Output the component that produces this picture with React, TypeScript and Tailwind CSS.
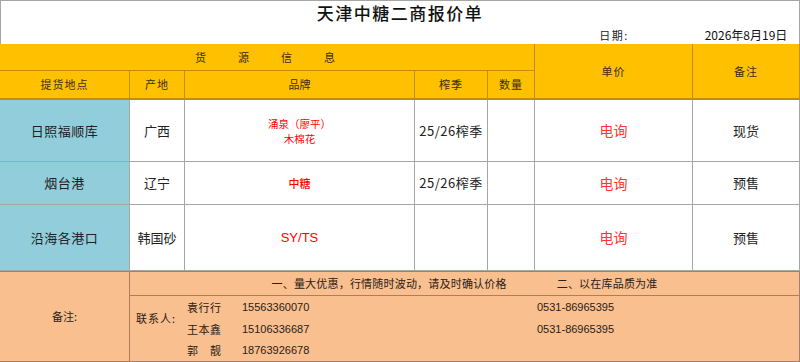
import React from 'react';

const cjk = { fontFamily: "'Noto Sans CJK SC', 'Liberation Sans', sans-serif" };
const num = { fontFamily: "'Liberation Sans', 'Noto Sans CJK SC', sans-serif" };

type Row = {
  place: string;
  origin: string;
  brand: React.ReactNode;
  season: string;
  remark: string;
  h: string;
};

const rows: Row[] = [
  {
    place: '日照福顺库',
    origin: '广西',
    brand: (
      <div className="flex flex-col items-center text-[10.5px] leading-[15px] text-[#ff0000]">
        <span>涌泉（廖平）</span>
        <span>木棉花</span>
      </div>
    ),
    season: '25/26榨季',
    remark: '现货',
    h: 'h-[62px]'
  },
  {
    place: '烟台港',
    origin: '辽宁',
    brand: <span className="text-[11px] font-medium text-[#ff0000]">中糖</span>,
    season: '25/26榨季',
    remark: '预售',
    h: 'h-[43px]'
  },
  {
    place: '沿海各港口',
    origin: '韩国砂',
    brand: (
      <span className="text-[13px] text-[#ff0000]" style={num}>
        SY/TS
      </span>
    ),
    season: '',
    remark: '预售',
    h: 'h-[66px]'
  }
];

const contacts = [
  { name: '袁行行', phone: '15563360070', tel: '0531-86965395' },
  { name: '王本鑫', phone: '15106336687', tel: '0531-86965395' },
  { name: '郭　靓', phone: '18763926678', tel: '' }
];

const head = 'flex items-center justify-center bg-[#ffc000] border-r border-b border-[#bf8f00] text-[11px] text-[#3a2e10]';
const cell = 'flex items-center justify-center bg-white border-r border-b border-[#a6a6a6] text-[13px] text-[#222]';

export default function App() {
  return (
    <div className="w-[800px] h-[362px] overflow-hidden bg-white" style={cjk}>
      <div className="grid grid-cols-[130px_55px_230px_73px_47px_158px_107px] grid-rows-[26px_18px_27px_29px]">
        {/* title */}
        <div className="col-span-7 flex items-end justify-center border-t border-l border-r border-[#a6a6a6] pb-[1px]">
          <span className="text-[17px] font-medium tracking-[1.5px] text-[#111]">天津中糖二商报价单</span>
        </div>
        <div className="col-span-5 border-l border-[#a6a6a6]" />
        <div className="flex items-center justify-center text-[11px] tracking-[1.5px] text-[#222]">日期:</div>
        <div className="flex items-center justify-center border-r border-[#a6a6a6] text-[12px] text-[#111]">
          2026年8月19日
        </div>

        {/* header */}
        <div className={`${head} col-span-5 gap-[32px] pr-[4px]`}>
          <span>货</span>
          <span>源</span>
          <span>信</span>
          <span>息</span>
        </div>
        <div className={`${head} row-span-2 border-b-2 tracking-[1px]`}>单价</div>
        <div className={`${head} row-span-2 border-b-2 tracking-[1px]`}>备注</div>
        <div className={`${head} border-b-2 tracking-[1px]`}>提货地点</div>
        <div className={`${head} border-b-2 tracking-[1px]`}>产地</div>
        <div className={`${head} border-b-2`}>品牌</div>
        <div className={`${head} border-b-2 tracking-[1px]`}>榨季</div>
        <div className={`${head} border-b-2 tracking-[1px]`}>数量</div>
      </div>

      {/* body */}
      {rows.map((r, i) => (
        <div key={i} className={`grid grid-cols-[130px_55px_230px_73px_47px_158px_107px] ${r.h}`}>
          <div className="flex items-center justify-center bg-[#92cddc] border-r border-b border-[#a6a6a6] text-[13px] tracking-[0.5px] text-[#222]">
            {r.place}
          </div>
          <div className={cell}>{r.origin}</div>
          <div className={cell}>{r.brand}</div>
          <div className={`${cell} tracking-[0.5px]`}>{r.season}</div>
          <div className={cell} />
          <div className={`${cell} text-[14px] text-[#ff3333]`}>电询</div>
          <div className={cell}>{r.remark}</div>
        </div>
      ))}

      {/* footer */}
      <div className="flex h-[91px] bg-[#f9bf8f] border-t border-[#b07d58] text-[#2a2118]">
        <div className="flex w-[130px] items-center justify-center border-r border-b border-[#b07d58] text-[11px]">
          备注:
        </div>
        <div className="flex flex-1 flex-col border-r border-[#a08070]">
          <div className="flex h-[28px] items-center justify-center gap-[50px] border-b border-[#b07d58] text-[11px] tracking-[0.2px]">
            <span>一、量大优惠，行情随时波动，请及时确认价格</span>
            <span>二、以在库品质为准</span>
          </div>
          <div className="flex flex-1 border-b border-[#a08070]">
            <div className="w-[57px] pl-[6px] pt-[14px] text-[11px] tracking-[1px]">联系人:</div>
            <div className="flex flex-col pt-[1px]">
              {contacts.map((c, i) => (
                <div key={i} className="flex h-[21.5px] items-center">
                  <span className="w-[55px] text-[11px] tracking-[0.5px]">{c.name}</span>
                  <span className="w-[295px] text-[11px]" style={num}>
                    {c.phone}
                  </span>
                  <span className="text-[11px]" style={num}>
                    {c.tel}
                  </span>
                </div>
              ))}
            </div>
          </div>
        </div>
      </div>
    </div>
  );
}
